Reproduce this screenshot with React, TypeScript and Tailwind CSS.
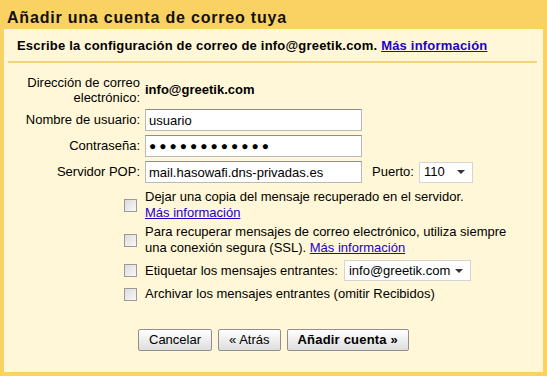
import React from 'react';

const Link: React.FC<{ children: React.ReactNode; bold?: boolean }> = ({ children, bold }) => (
  <a href="#" className={`text-[#2200cc] underline ${bold ? 'font-bold' : ''}`}>{children}</a>
);

const TextBox: React.FC<{ value: string; dots?: boolean }> = ({ value, dots }) => (
  <input
    type="text"
    readOnly
    defaultValue={value}
    className={`w-[217px] h-[22px] bg-white border border-[#b9b9b9] border-t-[#8d8d8d] pl-[3px] text-black outline-none font-['Liberation_Sans',Arial,sans-serif] ${dots ? "text-[12px] tracking-[3px] font-['DejaVu_Sans',sans-serif]" : 'text-[13px]'}`}
  />
);

const Select: React.FC<{ value: string; width: string }> = ({ value, width }) => (
  <div className={`${width} h-[21px] bg-white border border-[#d4d4d4] flex items-center justify-between pl-[4px] pr-[7px]`}>
    <span>{value}</span>
    <span className="w-0 h-0 border-l-[4px] border-r-[4px] border-t-[4px] border-l-transparent border-r-transparent border-t-[#333]" />
  </div>
);

const Check: React.FC = () => (
  <span className="block w-[13px] h-[13px] border border-[#9a9a9a] bg-gradient-to-br from-[#dcdcdc] to-[#f8f8f8] shrink-0" />
);

const Button: React.FC<{ children: React.ReactNode; bold?: boolean }> = ({ children, bold }) => (
  <button className={`h-[22px] px-[10px] border border-[#8f8f8f] rounded-[2px] bg-gradient-to-b from-white to-[#dedede] text-[13px] leading-[20px] text-black ${bold ? 'font-bold tracking-[0.2px]' : ''}`}>
    {children}
  </button>
);

export default function App() {
  return (
    <div className="w-[547px] h-[376px] bg-[#fad163] font-['Liberation_Sans',Arial,sans-serif] text-[13px] text-black flex flex-col overflow-hidden">
      <div className="h-[29px] pl-[7px] pt-[8px] text-[16px] font-bold leading-[20px] tracking-[0.8px] text-[#111]">
        Añadir una cuenta de correo tuya
      </div>
      <div className="ml-[4px] mr-[4px] h-[343px] bg-[#fff7d7] border-l-[1px] border-[#fffbe9] flex flex-col">
        <div className="px-[12px] pt-[9px] pb-[7px] font-bold leading-[16px] tracking-[0.2px]">
          Escribe la configuración de correo de info@greetik.com. <Link bold>Más información</Link>
        </div>
        <div className="mx-[3px] mr-[6px] h-[2px] bg-[#f3d47c]" />

        <div className="grid grid-cols-[135px_auto] gap-x-[5px] gap-y-[4px] mt-[12px] items-center">
          <div className="text-right leading-[15px]">Dirección de correo<br />electrónico:</div>
          <div className="font-bold">info@greetik.com</div>

          <div className="text-right">Nombre de usuario:</div>
          <div><TextBox value="usuario" /></div>

          <div className="text-right">Contraseña:</div>
          <div><TextBox value="●●●●●●●●●●●●" dots /></div>

          <div className="text-right">Servidor POP:</div>
          <div className="flex items-center">
            <TextBox value="mail.hasowafi.dns-privadas.es" />
            <span className="ml-[10px] mr-[5px]">Puerto:</span>
            <Select value="110" width="w-[54px]" />
          </div>
        </div>

        <div className="ml-[119px] mt-[6px] flex flex-col leading-[16px]">
          <div className="flex items-center gap-[8px]">
            <Check />
            <div>Dejar una copia del mensaje recuperado en el servidor.<br /><Link>Más información</Link></div>
          </div>
          <div className="flex items-center gap-[8px] mt-[3px]">
            <Check />
            <div>Para recuperar mensajes de correo electrónico, utiliza siempre<br />una conexión segura (SSL). <Link>Más información</Link></div>
          </div>
          <div className="flex items-center gap-[8px] mt-[4px]">
            <Check />
            <span>Etiquetar los mensajes entrantes:</span>
            <Select value="info@greetik.com" width="w-[127px] -ml-[2px]" />
          </div>
          <div className="flex items-center gap-[8px] mt-[5px]">
            <Check />
            <span>Archivar los mensajes entrantes (omitir Recibidos)</span>
          </div>
        </div>

        <div className="ml-[133px] mt-[27px] flex gap-[6px]">
          <Button>Cancelar</Button>
          <Button>« Atrás</Button>
          <Button bold>Añadir cuenta »</Button>
        </div>
      </div>
    </div>
  );
}
